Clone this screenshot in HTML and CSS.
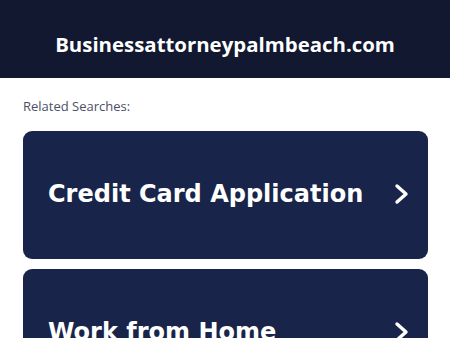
FILE: index.html
```html
<!DOCTYPE html>
<html>
<head>
<meta charset="utf-8">
<link rel="stylesheet" href="styles.css">
</head>
<body>
<header class="site-header">
  <h1 class="site-title">Businessattorneypalmbeach.com</h1>
</header>
<main class="content">
  <p class="related-label">Related Searches:</p>
  <div class="cards">
    <a class="card" href="#">
      <span class="card-text">Credit Card Application</span>
      <svg class="chevron" width="16" height="22" viewBox="0 0 16 22"><path d="M3 3 L12 11 L3 19" fill="none" stroke="#fff" stroke-width="3.4" stroke-linecap="round" stroke-linejoin="round"/></svg>
    </a>
    <a class="card" href="#">
      <span class="card-text">Work from Home</span>
      <svg class="chevron" width="16" height="22" viewBox="0 0 16 22"><path d="M3 3 L12 11 L3 19" fill="none" stroke="#fff" stroke-width="3.4" stroke-linecap="round" stroke-linejoin="round"/></svg>
    </a>
  </div>
</main>
</body>
</html>
```
FILE: styles.css
```css
html, body {
  margin: 0;
  padding: 0;
  background: #ffffff;
}
.site-header {
  background: #111830;
  height: 78px;
  box-sizing: border-box;
  padding-top: 9px;
  display: flex;
  align-items: center;
  justify-content: center;
}
.site-title {
  margin: 0;
  color: #ffffff;
  font-family: "Open Sans", sans-serif;
  font-weight: 700;
  font-size: 20.4px;
}
.content {
  padding: 0 22px 0 23px;
}
.related-label {
  margin: 20px 0 0 0;
  height: 33px;
  font-family: "Open Sans", sans-serif;
  font-size: 13px;
  color: #4b5068;
  line-height: 17px;
}
.cards {
  display: flex;
  flex-direction: column;
  gap: 10px;
}
.card {
  display: flex;
  align-items: center;
  justify-content: space-between;
  height: 128px;
  box-sizing: border-box;
  padding: 0 18px 2px 25px;
  background: #19244a;
  border-radius: 9px;
  text-decoration: none;
}
.card-text {
  color: #ffffff;
  font-family: "DejaVu Sans", sans-serif;
  font-weight: bold;
  font-size: 24px;
}
.chevron {
  display: block;
}
```
